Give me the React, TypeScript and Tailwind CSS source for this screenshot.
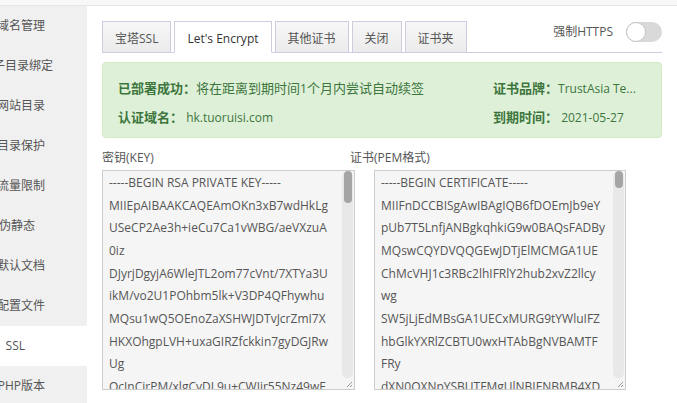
import React from 'react';

const menuItems = [
    '域名管理',
    '子目录绑定',
    '网站目录',
    '目录保护',
    '流量限制',
    '伪静态',
    '默认文档',
    '配置文件',
    'SSL',
    'PHP版本',
];

const menuPad: Record<string, string> = {
    '子目录绑定': 'pr-[34px]',
    '伪静态': 'pr-[52px]',
    SSL: 'pr-[62px] bg-white',
};

const tabs = ['宝塔SSL', "Let's Encrypt", '其他证书', '关闭', '证书夹'];

const keyLines = [
    '-----BEGIN RSA PRIVATE KEY-----',
    'MIIEpAIBAAKCAQEAmOKn3xB7wdHkLg',
    'USeCP2Ae3h+ieCu7Ca1vWBG/aeVXzuA',
    '0iz',
    'DJyrjDgyjA6WleJTL2om77cVnt/7XTYa3U',
    'ikM/vo2U1POhbm5lk+V3DP4QFhywhu',
    'MQsu1wQ5OEnoZaXSHWJDTvJcrZmI7X',
    'HKXOhgpLVH+uxaGIRZfckkin7gyDGJRw',
    'Ug',
    'QcJnCirPM/xlgCyDL9u+CWJir55Nz49wE',
];

const certLines = [
    '-----BEGIN CERTIFICATE-----',
    'MIIFnDCCBISgAwIBAgIQB6fDOEmJb9eY',
    'pUb7T5LnfjANBgkqhkiG9w0BAQsFADBy',
    'MQswCQYDVQQGEwJDTjElMCMGA1UE',
    'ChMcVHJ1c3RBc2lhIFRlY2hub2xvZ2llcy',
    'wg',
    'SW5jLjEdMBsGA1UECxMURG9tYWluIFZ',
    'hbGlkYXRlZCBTU0wxHTAbBgNVBAMTF',
    'FRy',
    'dXN0QXNpYSBUTFMgUlNBIENBMB4XD',
];

// fake textarea with the little overlay-style scrollbar
const CodeBox: React.FC<{ lines: string[]; thumb: string; width: string }> = ({ lines, thumb, width }) => (
    <div className={`relative flex h-[220px] ${width} border border-[#cccccc] bg-[#f5f5f5]`}>
        <div className="flex-1 overflow-hidden whitespace-pre pl-[6px] pt-[1px] text-[12px] leading-[22.67px] text-[#555555]">
            {lines.map((l, i) => (
                <div key={i}>{l}</div>
            ))}
        </div>
        <div className="flex w-[13px] justify-center pb-[11px]">
            <div className="flex h-full w-[11px] flex-col items-center rounded-full bg-[#e8e8e8]">
                <div className={`w-[8px] rounded-full bg-[#a5a5a5] ${thumb}`}></div>
            </div>
        </div>
        <svg className="absolute bottom-[1px] right-[1px]" width="7" height="7" viewBox="0 0 7 7">
            <path d="M6 1L1 6M6 4L4 6" stroke="#9a9a9a" strokeWidth="1" />
        </svg>
    </div>
);

const App: React.FC = () => {
    return (
        <div className="h-[403px] w-[677px] overflow-hidden bg-white font-['Open_Sans','Noto_Sans_CJK_SC',sans-serif] text-[12px] text-[#555555]">
            {/* top strip of the layer */}
            <div className="h-[6px] border-b border-[#e6e6e6] bg-[#f8f8f8]"></div>

            <div className="flex h-[397px]">
                {/* Left menu */}
                <div className="w-[87px] shrink-0 overflow-hidden bg-[#f0f0f0]">
                    {menuItems.map((item) => (
                        <div
                            key={item}
                            className={`flex h-[40px] items-center justify-end whitespace-nowrap ${menuPad[item] ?? 'pr-[42px]'}`}
                        >
                            {item}
                        </div>
                    ))}
                </div>

                {/* Main */}
                <div className="flex-1 px-[15px] pt-[15px]">
                    {/* Tabs */}
                    <div className="flex h-[32px] border-b border-[#cfcbe0]">
                        <div className="flex gap-[3px]">
                            {tabs.map((t) => (
                                <div
                                    key={t}
                                    className={
                                        t === "Let's Encrypt"
                                            ? 'flex h-[32px] items-center whitespace-nowrap border border-b-white border-[#cfcbe0] bg-white px-[12px] pt-[3px] text-[#333333]'
                                            : 'flex h-[32px] items-center whitespace-nowrap border border-[#cfcbe0] bg-gradient-to-b from-[#f7f7f7] to-[#ebebeb] px-[12px] pt-[3px]'
                                    }
                                >
                                    {t}
                                </div>
                            ))}
                        </div>
                        <div className="ml-auto mt-[1px] flex h-[20px] items-center gap-[13px]">
                            <span className="whitespace-nowrap">强制HTTPS</span>
                            <div className="flex h-[20px] w-[36px] items-center rounded-full bg-[#d9d9d9]">
                                <div className="h-[20px] w-[20px] rounded-full border border-[#c4c4c4] bg-white"></div>
                            </div>
                        </div>
                    </div>

                    {/* Status alert */}
                    <div className="mt-[9px] flex h-[76px] rounded-[4px] border border-[#d6e9c6] bg-[#dff0d8] pt-[11px] text-[13px] leading-[28px] text-[#3c763d]">
                        <div className="flex-1 pl-[15px]">
                            <div className="whitespace-nowrap">
                                <b>已部署成功：</b>将在距离到期时间<span className="text-[12px]">1</span>个月内尝试自动续签
                            </div>
                            <div className="whitespace-nowrap">
                                <b>认证域名：</b>
                                <span className="text-[12px]"> hk.tuoruisi.com</span>
                            </div>
                        </div>
                        <div className="w-[168px]">
                            <div className="whitespace-nowrap">
                                <b>证书品牌：</b>
                                <span className="text-[12px]">TrustAsia Te...</span>
                            </div>
                            <div className="whitespace-nowrap">
                                <b>到期时间：</b>
                                <span className="text-[12px]"> 2021-05-27</span>
                            </div>
                        </div>
                    </div>

                    {/* Key / cert */}
                    <div className="mt-[10px] flex">
                        <div className="mr-[19px]">
                            <div className="h-[20px] leading-[20px]">密钥(KEY)</div>
                            <div className="mt-[2px]">
                                <CodeBox lines={keyLines} thumb="h-[32px]" width="w-[253px]" />
                            </div>
                        </div>
                        <div>
                            <div className="-ml-[24px] h-[20px] leading-[20px]">证书(PEM格式)</div>
                            <div className="mt-[2px]">
                                <CodeBox lines={certLines} thumb="h-[17px]" width="w-[252px]" />
                            </div>
                        </div>
                    </div>
                </div>
            </div>
        </div>
    );
};

export default App;
